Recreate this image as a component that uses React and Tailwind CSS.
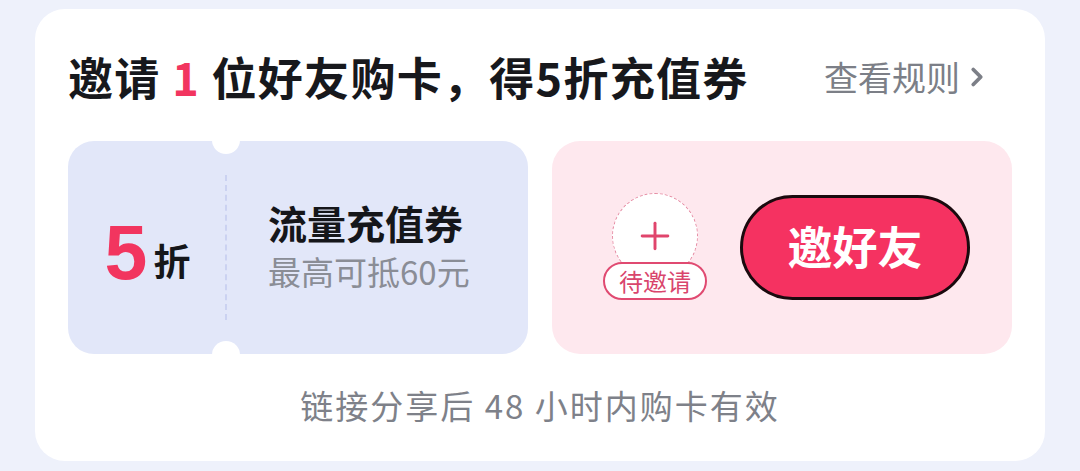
import { ChevronRight, Plus } from 'lucide-react';

const FONT = { fontFamily: '"Noto Sans CJK SC", "Noto Sans", sans-serif' };

// coupon ticket with notched divider
function Ticket() {
  return (
    <div className="relative flex h-[213px] w-[460px] rounded-[26px] bg-[#e2e7f9]">
      {/* notches cut into top and bottom edge */}
      <div className="absolute left-[144px] top-[-15px] h-[28px] w-[28px] rounded-full bg-white" />
      <div className="absolute left-[144px] bottom-[-15px] h-[28px] w-[28px] rounded-full bg-white" />

      <div className="flex w-[157px] items-end justify-center pb-[72px] pl-[2px]">
        <span className="text-[77px] font-bold leading-[60px] text-[#f2355f]" style={{ fontFamily: '"Liberation Sans", sans-serif' }}>
          5
        </span>
        <span className="ml-[6px] text-[37px] font-bold leading-[44px] text-[#15161a]">折</span>
      </div>

      <div className="my-[34px] border-l-[2px] border-dashed border-[#cbd2f1]" />

      <div className="flex flex-col justify-center pl-[41px] pb-[6px]">
        <div className="text-[39px] font-bold leading-[46px] text-[#15161a]">流量充值券</div>
        <div className="mt-[6px] text-[33px] leading-[40px] text-[#8a8d96]">最高可抵60元</div>
      </div>
    </div>
  );
}

function InvitePanel() {
  return (
    <div className="flex h-[213px] w-[460px] items-center gap-[33px] rounded-[28px] bg-[#fee8ee] pl-[51px]">
      <div className="relative flex h-[110px] w-[104px] flex-col items-center">
        <div className="flex h-[86px] w-[86px] items-center justify-center rounded-full border-[1.5px] border-dashed border-[#e58aa2] bg-white">
          <Plus size={44} strokeWidth={1.6} className="text-[#e0456c]" />
        </div>
        <div className="absolute top-[69px] flex h-[38px] w-[104px] items-center justify-center rounded-full border-[2px] border-[#e04a71] bg-white text-[24px] leading-none text-[#d9456c]">
          待邀请
        </div>
      </div>
      <button className="flex h-[105px] w-[230px] items-center justify-center rounded-full border-[3px] border-[#1a0a0e] bg-[#f53261] pb-[4px] text-[45px] font-bold text-white">
        邀好友
      </button>
    </div>
  );
}

export default function App() {
  return (
    <div className="min-h-[471px] bg-[#eef1fb] px-[35px] pt-[9px]" style={FONT}>
      <div className="h-[452px] rounded-[30px] bg-white px-[33px] pt-[40px]">
        <div className="flex items-center justify-between">
          <h1 className="text-[45px] font-bold leading-[56px] tracking-[1.3px] text-[#17181c]">
            邀请 <span className="text-[#f2355f]">1</span> 位好友购卡，得5折充值券
          </h1>
          <a className="mr-[20px] flex items-center text-[34px] leading-none text-[#7c7f87]">
            查看规则
            <ChevronRight size={30} strokeWidth={3} className="ml-[2px]" />
          </a>
        </div>

        <div className="mt-[36px] flex gap-[24px]">
          <Ticket />
          <InvitePanel />
        </div>

        <p className="mt-[31px] text-center text-[33px] leading-[40px] tracking-[2px] text-[#7e8189]">
          链接分享后 48 小时内购卡有效
        </p>
      </div>
    </div>
  );
}
